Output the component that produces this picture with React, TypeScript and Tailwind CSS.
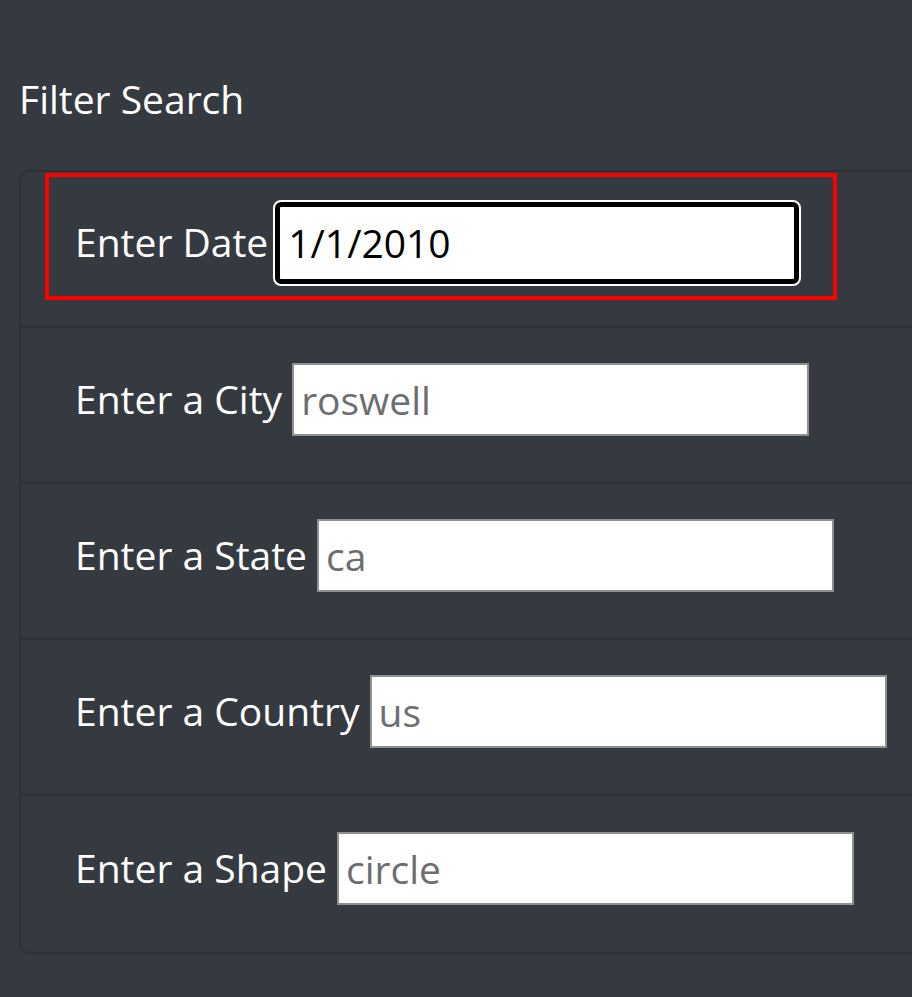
const fields = [
  { label: 'Enter a City', value: 'roswell' },
  { label: 'Enter a State', value: 'ca' },
  { label: 'Enter a Country', value: 'us' },
  { label: 'Enter a Shape', value: 'circle' },
]

function App() {
  return (
    <div
      className="h-screen w-full overflow-hidden bg-[#343a40] text-white"
      style={{ fontFamily: '"Open Sans", Lato, sans-serif' }}
    >
      <h3 className="pl-[19px] pt-[74px] text-[39px] leading-[50px]">Filter Search</h3>
      <div className="ml-[19px] mt-[46px] w-[1000px] rounded-[10px] border-2 border-[#2c3136]">
        <ul>
          <li className="flex h-[156px] items-start border-b-2 border-[#2c3136] pl-[24px] pt-[1px]">
            <div className="flex h-[127px] w-[792px] items-center border-4 border-[#ff0000] pl-[26px] pt-[12px]">
              <label className="mr-[7px] text-[39px]">Enter Date</label>
              <input
                className="h-[82px] w-[524px] rounded-[6px] border-[5px] border-black bg-white px-[8px] text-[39px] text-black outline-2 outline-white"
                defaultValue="1/1/2010"
              />
            </div>
          </li>
          {fields.map((f, i) => (
            <li
              key={f.label}
              className={
                'flex h-[156px] items-center pb-[11px] pl-[54px] ' +
                (i < fields.length - 1 ? 'border-b-2 border-[#2c3136]' : '')
              }
            >
              <label className="mr-[10px] text-[39px]">{f.label}</label>
              <input
                className="h-[73px] w-[517px] border-2 border-[#8f8f8f] bg-white px-[7px] text-[39px] text-[#6e6e6e] outline-none placeholder:text-[#6e6e6e]"
                placeholder={f.value}
              />
            </li>
          ))}
        </ul>
      </div>
    </div>
  )
}

export default App
